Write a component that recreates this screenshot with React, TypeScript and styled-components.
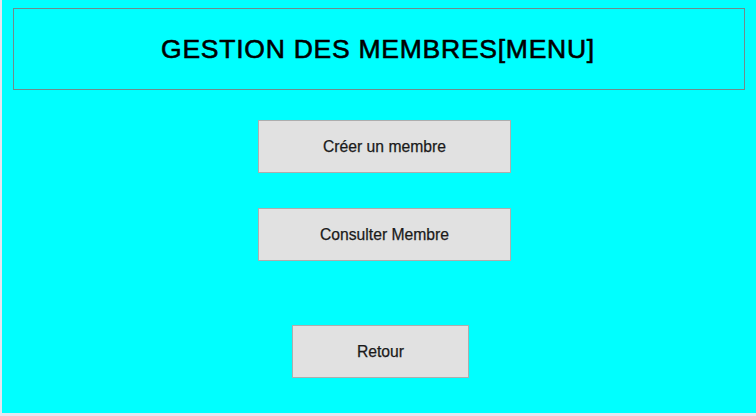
import React from "react";
import styled, { createGlobalStyle } from "styled-components";

const Global = createGlobalStyle`
  html, body { margin: 0; padding: 0; background: #e6e6f0; }
  body { font-family: "Liberation Sans", Arial, sans-serif; }
`;

const Window = styled.div`
  width: 756px;
  height: 416px;
  box-sizing: border-box;
  padding: 0 0 3px 2px;
  background: #e6e6f0;
`;

const Panel = styled.div`
  height: 100%;
  background: #00ffff;
  display: flex;
  flex-direction: column;
  align-items: flex-start;
  padding-top: 8px;
  box-sizing: border-box;
`;

const Header = styled.div`
  margin-left: 11px;
  width: 732px;
  height: 82px;
  box-sizing: border-box;
  border: 1px solid #6e8c8c;
  display: flex;
  align-items: center;
  justify-content: center;
`;

const Title = styled.h1`
  margin: 0 0 0 -2px;
  font-family: "Liberation Sans", Arial, sans-serif;
  font-weight: normal;
  font-size: 26.5px;
  letter-spacing: 0.75px;
  -webkit-text-stroke: 0.6px #000;
  color: #000;
`;

const MenuButton = styled.button<{ $left: number; $top: number; $width: number }>`
  margin-left: ${(p) => p.$left}px;
  margin-top: ${(p) => p.$top}px;
  width: ${(p) => p.$width}px;
  height: 53px;
  box-sizing: border-box;
  background: #e1e1e1;
  border: 1px solid #adadad;
  font-family: "Liberation Sans", Arial, sans-serif;
  font-size: 15.7px;
  -webkit-text-stroke: 0.25px #1a1a1a;
  color: #1a1a1a;
  padding: 0;
  cursor: pointer;
`;

export default function App() {
  return (
    <>
      <Global />
      <Window>
        <Panel>
          <Header>
            <Title>GESTION DES MEMBRES[MENU]</Title>
          </Header>
          <MenuButton $left={256} $top={30} $width={253}>Créer un membre</MenuButton>
          <MenuButton $left={256} $top={35} $width={253}>Consulter Membre</MenuButton>
          <MenuButton $left={290} $top={64} $width={177}>Retour</MenuButton>
        </Panel>
      </Window>
    </>
  );
}
